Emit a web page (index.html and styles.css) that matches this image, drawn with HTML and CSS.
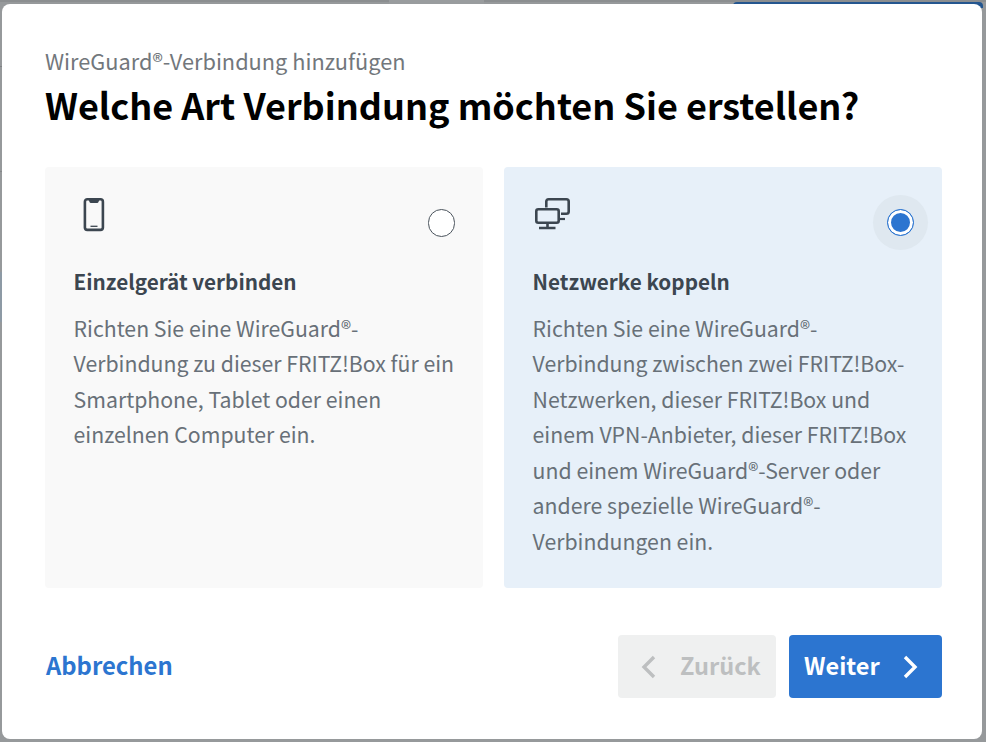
FILE: index.html
```html
<!DOCTYPE html>
<html lang="de">
<head>
<meta charset="utf-8">
<title>WireGuard</title>
<link rel="stylesheet" href="styles.css">
</head>
<body>
<div class="backdrop">
  <i class="bg bg-a"></i><i class="bg bg-b"></i><i class="bg bg-c"></i><i class="bg bg-d"></i>
  <i class="bg bg-e"></i><i class="bg bg-f"></i><i class="bg bg-g"></i>
</div>
<main class="modal">
  <p class="sub">WireGuard®-Verbindung hinzufügen</p>
  <h1 class="title">Welche Art Verbindung möchten Sie erstellen?</h1>
  <div class="cards">
    <section class="card">
      <div class="card-head">
        <svg class="icon" width="40" height="34" viewBox="0 0 40 34" fill="none" stroke="#3c4650">
          <rect x="10.900" y="1.300" width="18" height="30.600" rx="2.400" stroke-width="2.600"/>
          <path d="M14.500 1.500h11l-1 2.500q-.4.9-1.300.9h-6.400q-.9 0-1.300-.9z" fill="#3c4650" stroke="none"/>
          <path d="M16.500 28.300h7" stroke-width="1.300"/>
        </svg>
        <span class="radio"></span>
      </div>
      <h2 class="card-title">Einzelgerät verbinden</h2>
      <p class="card-text">Richten Sie eine WireGuard®-<br>Verbindung zu dieser FRITZ!Box für ein<br>Smartphone, Tablet oder einen<br>einzelnen Computer ein.</p>
    </section>
    <section class="card card-on">
      <div class="card-head">
        <svg class="icon" width="40" height="34" viewBox="0 0 40 34" fill="none" stroke="#3c4650" stroke-width="2.600">
          <path d="M13.300 9.500V3.600Q13.300 1.300 15.600 1.300H33.400Q35.700 1.300 35.700 3.600V13.500Q35.700 15.800 33.400 15.800H28"/>
          <path d="M27 21H32" stroke-width="2.200"/>
          <rect x="3.300" y="11.300" width="22.400" height="13.400" rx="2"/>
          <path d="M14.500 26v3.500M6 30H22.500"/>
        </svg>
        <span class="halo"><span class="radio radio-on"></span></span>
      </div>
      <h2 class="card-title">Netzwerke koppeln</h2>
      <p class="card-text">Richten Sie eine WireGuard®-<br>Verbindung zwischen zwei FRITZ!Box-<br>Netzwerken, dieser FRITZ!Box und<br>einem VPN-Anbieter, dieser FRITZ!Box<br>und einem WireGuard®-Server oder<br>andere spezielle WireGuard®-<br>Verbindungen ein.</p>
    </section>
  </div>
  <footer class="foot">
    <a class="cancel">Abbrechen</a>
    <div class="actions">
      <button class="btn btn-off" type="button">
        <svg width="16" height="24" viewBox="0 0 16 24" fill="none" stroke="#bdbfc0" stroke-width="3.400"><path d="M13 2 3 12l10 10"/></svg>
        <span class="btn-label">Zurück</span>
      </button>
      <button class="btn btn-go" type="button">
        <span class="btn-label">Weiter</span>
        <svg width="16" height="24" viewBox="0 0 16 24" fill="none" stroke="#fff" stroke-width="3.400"><path d="m3 2 10 10L3 22"/></svg>
      </button>
    </div>
  </footer>
</main>
</body>
</html>
```
FILE: styles.css
```css
* { box-sizing: border-box; }
html, body { margin: 0; height: 100%; }
body {
  background: #96999b;
  font-family: "Noto Sans CJK SC", "Noto Sans", sans-serif;
  overflow: hidden;
  position: relative;
}
.bg { position: absolute; display: block; }
.bg-a { left: 0; top: 0; width: 986px; height: 2px; background: #8b8e90; }
.bg-b { left: 389px; top: 0; width: 95px; height: 4px; background: #999c9e; }
.bg-c { left: 733px; top: 2px; width: 250px; height: 6px; background: #24568f; border-radius: 4px 4px 0 0; }
.bg-d { left: 2px; top: 24px; width: 2px; height: 20px; background: #6d5a44; }
.bg-e { left: 0; top: 66px; width: 4px; height: 1px; background: #7f8285; }
.bg-f { left: 0; top: 171px; width: 4px; height: 1px; background: #85888a; }
.bg-g { left: 0; top: 272px; width: 4px; height: 50px; background: #8d9aa5; }
.modal {
  position: absolute;
  left: 2px;
  top: 4px;
  width: 980px;
  height: 735px;
  background: #fff;
  border-radius: 8px;
  padding: 42px 40px 41px 43px;
  display: flex;
  flex-direction: column;
}
.sub {
  margin: 0;
  font-size: 21.750px;
  line-height: 30px;
  color: #72777c;
}
.title {
  margin: 2px 0 0;
  font-size: 36px;
  line-height: 52px;
  font-weight: 700;
  color: #000;
}
.cards {
  display: grid;
  grid-template-columns: 438px 438px;
  column-gap: 21px;
  margin-top: 37px;
  height: 421px;
}
.card {
  background: #f9f9f9;
  border-radius: 4px;
  padding: 29px 28px 0 28.600px;
}
.card-on { background: #e7f0f9; }
.card-head {
  display: flex;
  justify-content: space-between;
  align-items: flex-start;
  height: 70px;
}
.icon { display: block; margin-top: 2px; }
.radio {
  display: block;
  width: 27.500px;
  height: 27.500px;
  margin-top: 13px;
  border: 1px solid #4a535c;
  border-radius: 50%;
  background: #fff;
}
.halo {
  display: flex;
  align-items: center;
  justify-content: center;
  width: 55px;
  height: 55px;
  margin: -1px -14px 0 0;
  border-radius: 50%;
  background: #dfe8f0;
}
.radio-on {
  margin: 0;
  width: 27px;
  height: 27px;
  border: 1.500px solid #2c75d0;
  background: #2c75d0;
  box-shadow: inset 0 0 0 3px #fff;
}
.card-title {
  margin: 0;
  font-size: 20.700px;
  line-height: 30px;
  font-weight: 700;
  color: #3c4650;
}
.card-text {
  margin: 13.500px 0 0;
  font-size: 21.250px;
  line-height: 35.550px;
  color: #687078;
}
.foot {
  display: flex;
  justify-content: space-between;
  align-items: center;
  margin-top: 47px;
  height: 63px;
}
.cancel {
  font-size: 23.800px;
  font-weight: 700;
  color: #2c75d0;
  line-height: 30px;
  padding: 0 0 4px 1px;
}
.actions { display: flex; gap: 13px; }
.btn {
  display: flex;
  align-items: center;
  height: 63px;
  border: 0;
  border-radius: 4px;
  font: 700 23.500px/30px "Noto Sans CJK SC", "Noto Sans", sans-serif;
  padding: 0;
}
.btn-label { padding-bottom: 4px; }
.btn-off {
  width: 158px;
  background: #eff0f0;
  color: #bdbfc0;
  padding-left: 23px;
  gap: 23px;
}
.btn-go {
  width: 153px;
  background: #2c75d0;
  color: #fff;
  padding-left: 15px;
  gap: 22px;
}
```
